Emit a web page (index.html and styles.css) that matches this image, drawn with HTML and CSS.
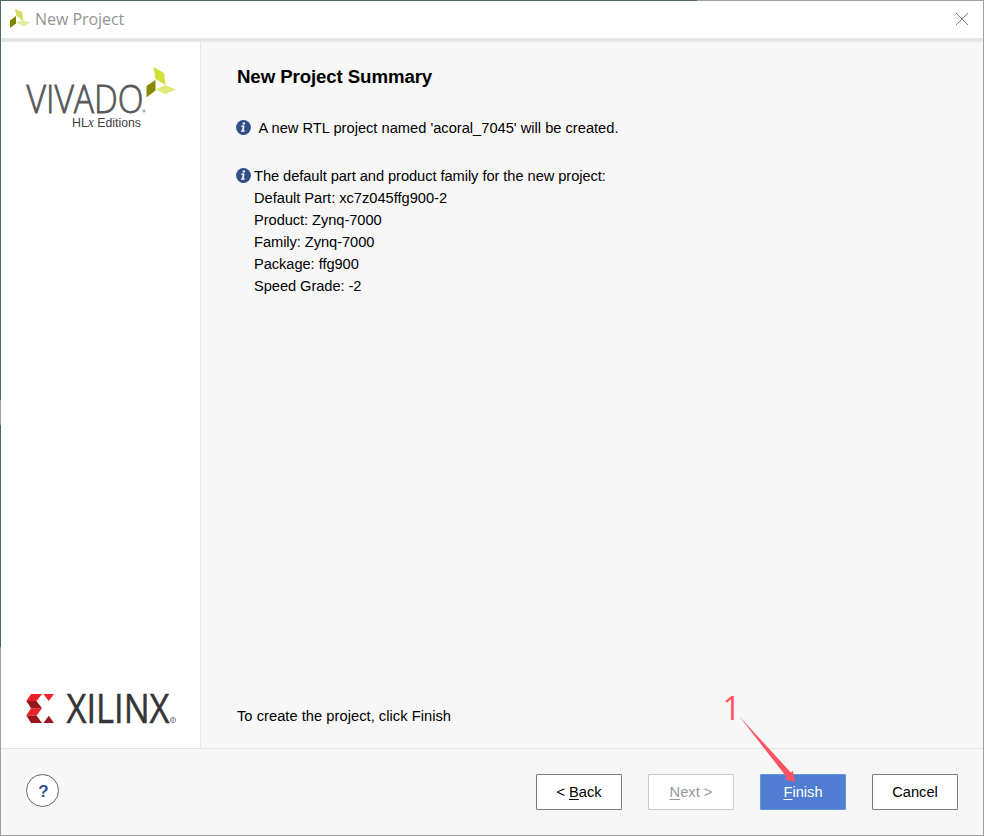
FILE: index.html
```html
<!DOCTYPE html>
<html lang="en">
<head>
<meta charset="utf-8">
<title>New Project</title>
<link rel="stylesheet" href="styles.css">
</head>
<body>
<div class="dialog">
  <header class="titlebar">
    <svg class="app-icon" width="20" height="20" viewBox="0 0 20 20">
      <path fill="#d5de5e" d="M5 0l7 3 1.500 9-7-5z"/>
      <path fill="#7f8500" d="M0 11.500l6-4.500v7.500l-6 4.500z"/>
      <path fill="#e5ea9c" d="M6 13.500l6-2.500 8 2.500-6 4z"/>
    </svg>
    <span class="title">New Project</span>
    <svg class="close" width="14" height="14" viewBox="0 0 14 14"><path d="M1 1l12 12M13 1L1 13" stroke="#7d7d7d" fill="none"/></svg>
  </header>
  <div class="main">
    <aside class="sidebar">
      <svg class="vivado" width="175" height="84" viewBox="0 0 175 84">
        <text class="vivado-name" x="0.500" y="70.500" textLength="117" lengthAdjust="spacingAndGlyphs">VIVADO</text>
        <circle cx="118" cy="69" r="1.100" fill="none" stroke="#777" stroke-width=".7"/>
        <text class="edition" x="46" y="84.500" textLength="69" lengthAdjust="spacingAndGlyphs">HL<tspan class="edition-x">x</tspan> Editions</text>
        <path fill="#d0df34" d="M127.500 25l10.500 6 1.500 12-10-6z"/>
        <path fill="#878b04" d="M120.500 44l9-6v10.500l-9 7z"/>
        <path fill="#e3ea78" d="M129.500 47.500l9.500-4.500 11 4.500-10.500 4.800z"/>
      </svg>
      <svg class="xilinx" width="152" height="32" viewBox="0 0 152 32">
        <path fill="#ed2127" d="M5 1h11l-5.500 7H.3zM17.500 1H28l-5.300 7zM5 15.300h11l-5.500 7.200H.3z"/>
        <path fill="#98161d" d="M.3 8h10.200l5.500 7.300H5zM.3 22.500h10.200L16 30H5zM17.500 30l5.300-7.300L28 30z"/>
        <text class="xilinx-name" x="40.500" y="30" textLength="103" lengthAdjust="spacingAndGlyphs">XILINX</text>
        <circle cx="147" cy="27" r="2.700" fill="none" stroke="#555" stroke-width=".6"/>
        <path d="M146.200 28.500v-3h1.200q.8.800 0 1.600h-1M147.200 27.100l.9 1.400" fill="none" stroke="#555" stroke-width=".5"/>
      </svg>
    </aside>
    <main class="content">
      <h1>New Project Summary</h1>
      <section class="message created">
        <svg class="info" width="15" height="15" viewBox="0 0 15 15"><circle cx="7.500" cy="7.500" r="7.400" fill="#314f89"/><path fill="#fff" d="M6.900 2.500h2.200l-.4 2H6.500zM5.300 5.500h3.300l-1 5h1.200l-.3 1.300H4.800l.3-1.300h.9l.7-3.700H5z"/></svg>
        <p>A new RTL project named 'acoral_7045' will be created.</p>
      </section>
      <section class="message defaults">
        <svg class="info" width="15" height="15" viewBox="0 0 15 15"><circle cx="7.500" cy="7.500" r="7.400" fill="#314f89"/><path fill="#fff" d="M6.900 2.500h2.200l-.4 2H6.500zM5.300 5.500h3.300l-1 5h1.200l-.3 1.300H4.800l.3-1.300h.9l.7-3.700H5z"/></svg>
        <div>
          <p>The default part and product family for the new project:</p>
          <p class="part">Default Part: xc7z045ffg900-2</p>
          <p>Product: Zynq-7000</p>
          <p>Family: Zynq-7000</p>
          <p>Package: ffg900</p>
          <p>Speed Grade: -2</p>
        </div>
      </section>
      <p class="hint">To create the project, click Finish</p>
    </main>
  </div>
  <footer class="footer">
    <button class="help">?</button>
    <div class="actions">
      <button class="btn">&lt; <u>B</u>ack</button>
      <button class="btn disabled"><u>N</u>ext &gt;</button>
      <button class="btn primary"><u>F</u>inish</button>
      <button class="btn">Cancel</button>
    </div>
  </footer>
  <svg class="annotation" width="80" height="110" viewBox="0 -20 80 110">
    <text class="step" x="2.500" y="26">1</text>
    <path fill="#ff5364" d="M19 22L70.800 78.500l2-1.700 2.500 11.200-10.800-2.800 2.200-2z"/>
  </svg>
</div>
</body>
</html>
```
FILE: styles.css
```css
* { box-sizing: border-box; }
body {
  margin: 0;
  font: 14.67px/22px "Liberation Sans", Arial, sans-serif;
  color: #000;
}
p, h1 { margin: 0; }
.dialog {
  position: relative;
  display: flex;
  flex-direction: column;
  width: 984px;
  height: 836px;
  border: 1px solid transparent;
  background:
    linear-gradient(#f7f7f7, #f7f7f7) padding-box,
    linear-gradient(#506a6b, #506a6b) 0 0 / 697px 1px no-repeat border-box,
    linear-gradient(#506a6b 400px, #a0a0a0 400px, #a0a0a0 425px, #506a6b 425px) 0 0 / 1px 647px no-repeat border-box,
    linear-gradient(#a0a0a0, #a0a0a0) border-box;
}
.titlebar {
  display: flex;
  align-items: center;
  flex: none;
  height: 41px;
  padding: 0 14px 2px 9px;
  border-bottom: 4px solid #e6e6e6;
  background: #fff;
}
.app-icon { margin-right: 5px; }
.title {
  flex: 1;
  font: 16px/22px "Open Sans", "Noto Sans", sans-serif;
  letter-spacing: -0.05px;
  color: #949494;
}
.main { display: flex; flex: 1; min-height: 0; }
.sidebar {
  display: flex;
  flex-direction: column;
  justify-content: space-between;
  width: 200px;
  padding-bottom: 23px;
  padding-left: 25px;
  border-right: 1px solid #e6e6e6;
  background: #fff;
}
.vivado, .xilinx { display: block; overflow: visible; }
.vivado-name {
  font: 300 38px "Open Sans", sans-serif;
  fill: #58595b;
  stroke: #58595b;
  stroke-width: .8px;
}
.edition { font: 12.5px "Liberation Sans", sans-serif; fill: #3f3f40; }
.edition-x { font: italic 14px "Liberation Serif", serif; }
.xilinx-name {
  font: 40.5px "Open Sans", sans-serif;
  fill: #363535;
  stroke: #363535;
  stroke-width: .5px;
}
.content {
  display: flex;
  flex: 1;
  flex-direction: column;
  padding: 24px 36px 21px;
}
h1 { font-size: 18.67px; line-height: 22px; letter-spacing: -0.1px; }
.message { display: flex; }
.info { flex: none; margin: 3px 0 0 -1px; }
.created { margin-top: 29px; }
.created p { margin-left: 7.5px; }
.defaults { margin-top: 26px; }
.defaults div { margin-left: 3px; letter-spacing: -0.06px; }
.defaults .part { letter-spacing: -0.02px; }
.hint { margin-top: auto; letter-spacing: 0.04px; }
.footer {
  display: flex;
  align-items: flex-start;
  justify-content: space-between;
  flex: none;
  height: 87px;
  padding: 25px 25px 0;
  border-top: 1px solid #e3e3e3;
}
button { font: inherit; padding: 0; }
.help {
  width: 33px;
  height: 33px;
  padding: 2px 0 0 2px;
  border: 1px solid #666;
  border-radius: 50%;
  background: #fff;
  color: #314f89;
  font-size: 17px;
  font-weight: bold;
}
.actions { display: flex; gap: 26px; }
.btn {
  width: 86px;
  height: 36px;
  border: 1px solid #7c7c7c;
  border-radius: 1px;
  background: #fff;
  color: #000;
}
.btn u { text-underline-offset: 2px; text-decoration-thickness: 1px; text-decoration-skip-ink: none; }
.btn.disabled { border-color: #c9c9c9; color: #999; }
.btn.primary { border-color: #6594e0; background: #507dd2; color: #fff; }
.annotation { position: absolute; left: 719px; top: 673px; }
.step {
  font: 32px "Open Sans", sans-serif;
  fill: #ff5364;
}
```
